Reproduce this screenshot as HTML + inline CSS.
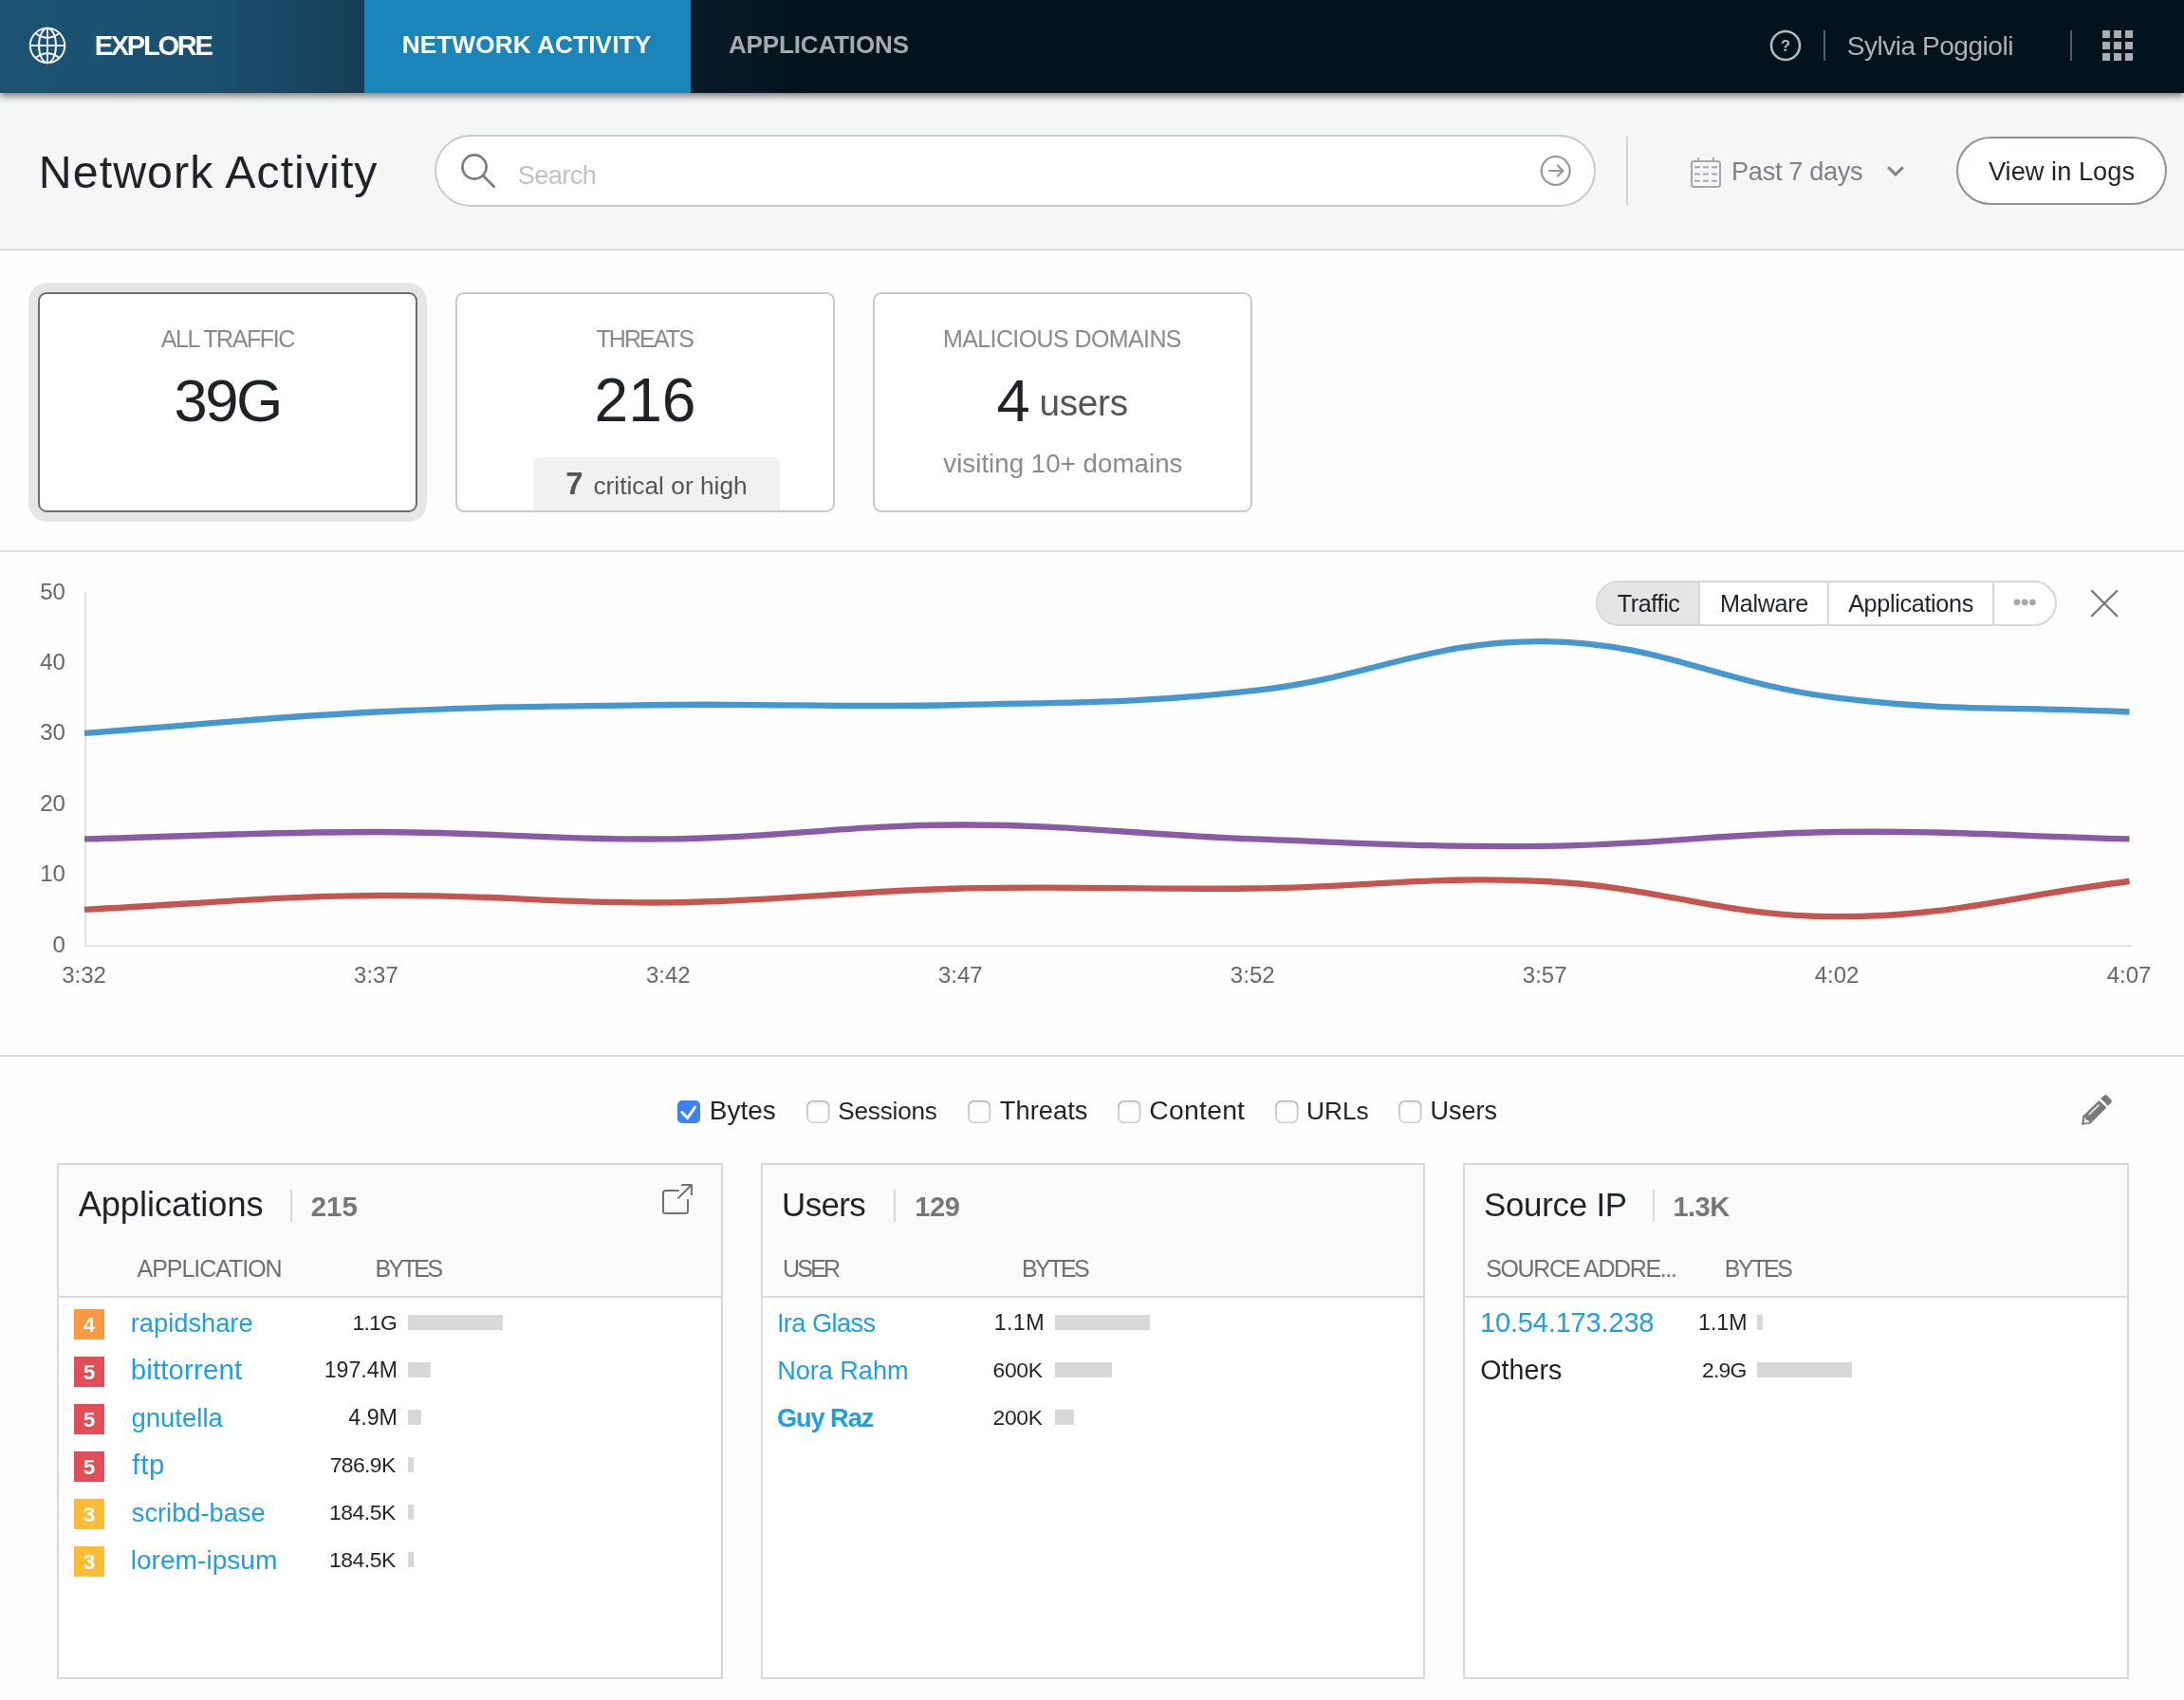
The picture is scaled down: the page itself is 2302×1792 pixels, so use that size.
<!DOCTYPE html>
<html><head><meta charset="utf-8"><title>Network Activity</title>
<style>
html,body{margin:0;padding:0;background:#fefefe;}
body{width:2302px;height:1792px;position:relative;overflow:hidden;background:#fefefe;font-family:"Liberation Sans",sans-serif;}
body>div{position:absolute;box-sizing:border-box;}
svg{position:absolute;left:0;top:0;will-change:transform;}
svg text{font-family:"Liberation Sans",sans-serif;}
</style></head><body>
<div style="left:0px;top:0px;width:2302px;height:262px;background:#f5f7f6;"></div>
<div style="left:0px;top:262px;width:2302px;height:2px;background:#dcdddd;"></div>
<div style="left:0px;top:0px;width:2302px;height:98px;background:#03131d;box-shadow:0 3px 8px rgba(0,0,0,.55);"></div>
<div style="left:728px;top:0px;width:130px;height:98px;background:linear-gradient(90deg,#071b28,#03131d);"></div>
<div style="left:0px;top:0px;width:384px;height:98px;background:linear-gradient(90deg,#1c5474 0%,#1b4f6e 60%,#163d55 100%);"></div>
<div style="left:384px;top:0px;width:344px;height:98px;background:#1b84b8;"></div>
<div style="left:1922px;top:32px;width:2px;height:32px;background:#535d66;"></div>
<div style="left:2182px;top:32px;width:2px;height:32px;background:#535d66;"></div>
<div style="left:458px;top:142px;width:1224px;height:76px;background:#fff;border:2px solid #c6c9cd;border-radius:38px;"></div>
<div style="left:1714px;top:144px;width:2px;height:72px;background:#d4d7da;"></div>
<div style="left:2062px;top:144px;width:222px;height:72px;background:#fff;border:2px solid #8e9399;border-radius:36px;"></div>
<div style="left:30px;top:298px;width:420px;height:252px;background:#e6e6e6;border-radius:20px;"></div>
<div style="left:40px;top:308px;width:400px;height:232px;background:#fff;border:2px solid #6e6e6e;border-radius:9px;"></div>
<div style="left:480px;top:308px;width:400px;height:232px;background:#fff;border:2px solid #c9c9c9;border-radius:9px;"></div>
<div style="left:920px;top:308px;width:400px;height:232px;background:#fff;border:2px solid #c9c9c9;border-radius:9px;"></div>
<div style="left:562px;top:482px;width:260px;height:56px;background:#f1f1f1;border-radius:7px 7px 0 0;"></div>
<div style="left:0px;top:580px;width:2302px;height:2px;background:#dcdcdc;"></div>
<div style="left:89px;top:624px;width:2px;height:374px;background:#e3e3e3;"></div>
<div style="left:89px;top:996px;width:2158px;height:2px;background:#e3e3e3;"></div>
<div style="left:1682px;top:612px;width:486px;height:48px;background:#fff;border:2px solid #d6d6d6;border-radius:24px;overflow:hidden;"></div>
<div style="left:1684px;top:614px;width:108px;height:44px;background:#e5e5e5;border-radius:22px 0 0 22px;"></div>
<div style="left:1790px;top:614px;width:2px;height:44px;background:#d6d6d6;"></div>
<div style="left:1926px;top:614px;width:2px;height:44px;background:#d6d6d6;"></div>
<div style="left:2100px;top:614px;width:2px;height:44px;background:#d6d6d6;"></div>
<div style="left:0px;top:1112px;width:2302px;height:2px;background:#dcdcdc;"></div>
<div style="left:714px;top:1160px;width:24px;height:24px;background:#3b82f6;border-radius:5px;"></div>
<div style="left:60px;top:1226px;width:702px;height:544px;background:#fff;border:2px solid #d8d8d8;"></div>
<div style="left:62px;top:1228px;width:698px;height:138px;background:#fafafa;"></div>
<div style="left:62px;top:1366px;width:698px;height:2px;background:#d8d8d8;"></div>
<div style="left:802px;top:1226px;width:700px;height:544px;background:#fff;border:2px solid #d8d8d8;"></div>
<div style="left:804px;top:1228px;width:696px;height:138px;background:#fafafa;"></div>
<div style="left:804px;top:1366px;width:696px;height:2px;background:#d8d8d8;"></div>
<div style="left:1542px;top:1226px;width:702px;height:544px;background:#fff;border:2px solid #d8d8d8;"></div>
<div style="left:1544px;top:1228px;width:698px;height:138px;background:#fafafa;"></div>
<div style="left:1544px;top:1366px;width:698px;height:2px;background:#d8d8d8;"></div>
<div style="left:306px;top:1254px;width:2px;height:34px;background:#d8d8d8;"></div>
<div style="left:78px;top:1380px;width:32px;height:32px;background:#f99a43;"></div>
<div style="left:430px;top:1386px;width:100px;height:16px;background:#d8d8d8;"></div>
<div style="left:78px;top:1430px;width:32px;height:32px;background:#e04e57;"></div>
<div style="left:430px;top:1436px;width:24px;height:16px;background:#d8d8d8;"></div>
<div style="left:78px;top:1480px;width:32px;height:32px;background:#e04e57;"></div>
<div style="left:430px;top:1486px;width:14px;height:16px;background:#d8d8d8;"></div>
<div style="left:78px;top:1530px;width:32px;height:32px;background:#e04e57;"></div>
<div style="left:430px;top:1536px;width:6px;height:16px;background:#d8d8d8;"></div>
<div style="left:78px;top:1580px;width:32px;height:32px;background:#fdbb36;"></div>
<div style="left:430px;top:1586px;width:6px;height:16px;background:#d8d8d8;"></div>
<div style="left:78px;top:1630px;width:32px;height:32px;background:#fdbb36;"></div>
<div style="left:430px;top:1636px;width:6px;height:16px;background:#d8d8d8;"></div>
<div style="left:942px;top:1254px;width:2px;height:34px;background:#d8d8d8;"></div>
<div style="left:1112px;top:1386px;width:100px;height:16px;background:#d8d8d8;"></div>
<div style="left:1112px;top:1436px;width:60px;height:16px;background:#d8d8d8;"></div>
<div style="left:1112px;top:1486px;width:20px;height:16px;background:#d8d8d8;"></div>
<div style="left:1742px;top:1254px;width:2px;height:34px;background:#d8d8d8;"></div>
<div style="left:1852px;top:1386px;width:6px;height:16px;background:#d8d8d8;"></div>
<div style="left:1852px;top:1436px;width:100px;height:16px;background:#d8d8d8;"></div>
<svg width="2302" height="1792" viewBox="0 0 2302 1792">
<g fill="none" stroke="#fff" stroke-width="1.9"><circle cx="50" cy="48" r="18.25"/><ellipse cx="50" cy="48" rx="9" ry="18.25"/><path d="M37.7 35.2Q50 44.2 62.3 35.2M37.7 60.8Q50 51.8 62.3 60.8"/><path d="M50 30V66M32 48H68" stroke="#e3e9ed"/></g>
<text x="99.65" y="58.00" font-size="29.1" font-weight="700" fill="#fff" textLength="125.28" lengthAdjust="spacing">EXPLORE</text>
<text x="423.65" y="56.20" font-size="26.2" font-weight="700" fill="#fff" textLength="262.47" lengthAdjust="spacing">NETWORK ACTIVITY</text>
<text x="767.95" y="56.20" font-size="26.0" font-weight="700" fill="#a4aaae" textLength="190.06" lengthAdjust="spacing">APPLICATIONS</text>
<circle cx="1882" cy="48" r="15" fill="none" stroke="#b3b8bc" stroke-width="2.6"/>
<text x="1882.00" y="54.00" font-size="16.5" font-weight="700" fill="#b3b8bc" text-anchor="middle">?</text>
<text x="1946.72" y="57.70" font-size="28.1" fill="#adb2b7" textLength="175.77" lengthAdjust="spacing">Sylvia Poggioli</text>
<rect x="2216" y="32" width="8" height="8" fill="#a9aeb2"/>
<rect x="2228" y="32" width="8" height="8" fill="#a9aeb2"/>
<rect x="2240" y="32" width="8" height="8" fill="#a9aeb2"/>
<rect x="2216" y="44" width="8" height="8" fill="#a9aeb2"/>
<rect x="2228" y="44" width="8" height="8" fill="#a9aeb2"/>
<rect x="2240" y="44" width="8" height="8" fill="#a9aeb2"/>
<rect x="2216" y="56" width="8" height="8" fill="#a9aeb2"/>
<rect x="2228" y="56" width="8" height="8" fill="#a9aeb2"/>
<rect x="2240" y="56" width="8" height="8" fill="#a9aeb2"/>
<text x="40.84" y="198.10" font-size="48.3" fill="#1f2328" textLength="356.66" lengthAdjust="spacing">Network Activity</text>
<g fill="none" stroke="#7b7c7d" stroke-width="2.7" stroke-linecap="round"><circle cx="500" cy="176" r="12.6"/><path d="M509.3 185.3L520.7 196.7"/></g>
<text x="545.76" y="194.00" font-size="27.2" fill="#c2c2c2" textLength="83.00" lengthAdjust="spacing">Search</text>
<g fill="none" stroke="#92979b" stroke-width="2.1"><circle cx="1639.7" cy="180" r="15"/><path d="M1632.3 180H1647M1641.3 173.8L1647.4 180L1641.3 186.2" stroke-linejoin="miter"/></g>
<g fill="none" stroke="#a3a8ac" stroke-width="2"><rect x="1783" y="170" width="30" height="27" rx="2.5"/><path d="M1790 166v4M1806 166v4"/><path d="M1786 176.2h6M1795 176.2h6M1804 176.2h6M1786 183.5h6M1795 183.5h6M1804 183.5h6M1786 190.8h6M1795 190.8h6M1804 190.8h6"/></g>
<text x="1825.07" y="189.90" font-size="27.2" fill="#7f8184" textLength="138.61" lengthAdjust="spacing">Past 7 days</text>
<path d="M1990.2 176.2L1998 184L2005.8 176.2" fill="none" stroke="#7c8288" stroke-width="3"/>
<text x="2095.88" y="189.90" font-size="27.2" fill="#1f2328" textLength="154.10" lengthAdjust="spacing">View in Logs</text>
<text x="169.85" y="365.90" font-size="25.0" fill="#8a8a8a" textLength="141.40" lengthAdjust="spacing">ALL TRAFFIC</text>
<text x="183.49" y="444.00" font-size="63.4" fill="#1f2328" textLength="114.85" lengthAdjust="spacing">39G</text>
<text x="628.44" y="365.90" font-size="25.0" fill="#8a8a8a" textLength="103.41" lengthAdjust="spacing">THREATS</text>
<text x="626.47" y="443.60" font-size="64.2" fill="#1f2328" textLength="107.05" lengthAdjust="spacing">216</text>
<text x="596.29" y="521.00" font-size="32.9" font-weight="700" fill="#555" textLength="20.16" lengthAdjust="spacing">7</text>
<text x="625.38" y="521.00" font-size="26.3" fill="#555" textLength="162.33" lengthAdjust="spacing">critical or high</text>
<text x="993.95" y="365.90" font-size="25.0" fill="#8a8a8a" textLength="251.60" lengthAdjust="spacing">MALICIOUS DOMAINS</text>
<text x="1050.54" y="444.00" font-size="63.5" fill="#1f2328" textLength="35.32" lengthAdjust="spacing">4</text>
<text x="1095.48" y="438.00" font-size="38.8" fill="#555" textLength="93.62" lengthAdjust="spacing">users</text>
<text x="994.31" y="498.00" font-size="27.7" fill="#8a8a8a" textLength="252.10" lengthAdjust="spacing">visiting 10+ domains</text>
<text x="68.94" y="1003.50" font-size="24" fill="#666" text-anchor="end">0</text>
<text x="68.94" y="929.10" font-size="24" fill="#666" text-anchor="end">10</text>
<text x="68.94" y="854.70" font-size="24" fill="#666" text-anchor="end">20</text>
<text x="68.94" y="780.30" font-size="24" fill="#666" text-anchor="end">30</text>
<text x="68.94" y="705.90" font-size="24" fill="#666" text-anchor="end">40</text>
<text x="68.94" y="631.50" font-size="24" fill="#666" text-anchor="end">50</text>
<text x="88.50" y="1035.90" font-size="24" fill="#666" text-anchor="middle">3:32</text>
<text x="396.43" y="1035.90" font-size="24" fill="#666" text-anchor="middle">3:37</text>
<text x="704.36" y="1035.90" font-size="24" fill="#666" text-anchor="middle">3:42</text>
<text x="1012.29" y="1035.90" font-size="24" fill="#666" text-anchor="middle">3:47</text>
<text x="1320.22" y="1035.90" font-size="24" fill="#666" text-anchor="middle">3:52</text>
<text x="1628.15" y="1035.90" font-size="24" fill="#666" text-anchor="middle">3:57</text>
<text x="1936.08" y="1035.90" font-size="24" fill="#666" text-anchor="middle">4:02</text>
<text x="2244.01" y="1035.90" font-size="24" fill="#666" text-anchor="middle">4:07</text>
<path d="M89.0 772.8C212.2 763.9 273.6 756.4 396.9 750.5C520.0 744.5 581.7 744.5 704.9 743.0C828.0 741.6 889.7 746.0 1012.8 743.0C1136.0 740.1 1198.3 741.5 1320.7 728.2C1444.7 714.7 1505.7 674.6 1628.7 676.1C1752.1 677.6 1812.4 720.6 1936.6 735.6C2058.7 750.4 2121.3 744.5 2244.5 750.5" fill="none" stroke="#4497cf" stroke-width="6.3"/>
<path d="M89.0 884.4C212.2 881.4 273.8 877.0 396.9 877.0C520.1 877.0 581.7 885.9 704.9 884.4C828.1 882.9 889.6 869.5 1012.8 869.5C1136.0 869.5 1197.5 879.9 1320.7 884.4C1443.8 888.9 1505.5 893.3 1628.7 891.8C1751.9 890.4 1813.4 878.4 1936.6 877.0C2059.7 875.5 2121.3 881.4 2244.5 884.4" fill="none" stroke="#8b5aa6" stroke-width="6.3"/>
<path d="M89.0 958.8C212.2 952.8 273.7 945.4 396.9 943.9C520.0 942.4 581.7 952.8 704.9 951.4C828.1 949.9 889.5 939.5 1012.8 936.5C1135.9 933.5 1197.6 938.0 1320.7 936.5C1443.9 935.0 1505.9 923.1 1628.7 929.0C1752.3 935.0 1813.4 966.2 1936.6 966.2C2059.8 966.2 2121.3 943.9 2244.5 929.0" fill="none" stroke="#c6544f" stroke-width="6.3"/>
<text x="1704.63" y="644.50" font-size="25.2" fill="#1f2328" textLength="66.33" lengthAdjust="spacing">Traffic</text>
<text x="1813.03" y="644.50" font-size="25.2" fill="#1f2328" textLength="93.29" lengthAdjust="spacing">Malware</text>
<text x="1948.15" y="644.50" font-size="25.2" fill="#1f2328" textLength="132.16" lengthAdjust="spacing">Applications</text>
<circle cx="2126" cy="634.8" r="3.4" fill="#a8a8a8"/>
<circle cx="2134.2" cy="634.8" r="3.4" fill="#a8a8a8"/>
<circle cx="2142.4" cy="634.8" r="3.4" fill="#a8a8a8"/>
<path d="M2204.9 622.9L2231.3 649.3M2231.3 622.9L2204.9 649.3" stroke="#777a7c" stroke-width="2.2" stroke-linecap="round" fill="none"/>
<path d="M718.8 1172.4L724.6 1178.6L732.6 1167" fill="none" stroke="#fff" stroke-width="3" stroke-linecap="round" stroke-linejoin="round"/>
<defs><linearGradient id="cbg" x1="0" y1="0" x2="0" y2="1"><stop offset="0" stop-color="#f3f3f3"/><stop offset=".35" stop-color="#fff"/></linearGradient><linearGradient id="cbs" x1="0" y1="0" x2="0" y2="1"><stop offset="0" stop-color="#b3b3b3"/><stop offset="1" stop-color="#cfcfcf"/></linearGradient></defs>
<rect x="851.1999999999999" y="1160.8" width="22.4" height="22.4" rx="5.5" fill="url(#cbg)" stroke="url(#cbs)" stroke-width="1.6"/>
<rect x="1021.0" y="1160.8" width="22.4" height="22.4" rx="5.5" fill="url(#cbg)" stroke="url(#cbs)" stroke-width="1.6"/>
<rect x="1179.1" y="1160.8" width="22.4" height="22.4" rx="5.5" fill="url(#cbg)" stroke="url(#cbs)" stroke-width="1.6"/>
<rect x="1345.2" y="1160.8" width="22.4" height="22.4" rx="5.5" fill="url(#cbg)" stroke="url(#cbs)" stroke-width="1.6"/>
<rect x="1475.2" y="1160.8" width="22.4" height="22.4" rx="5.5" fill="url(#cbg)" stroke="url(#cbs)" stroke-width="1.6"/>
<text x="747.70" y="1179.50" font-size="28.0" fill="#1f2328" textLength="70.11" lengthAdjust="spacing">Bytes</text>
<text x="883.21" y="1179.50" font-size="26.2" fill="#1f2328" textLength="104.74" lengthAdjust="spacing">Sessions</text>
<text x="1053.79" y="1179.50" font-size="27.3" fill="#1f2328" textLength="92.70" lengthAdjust="spacing">Threats</text>
<text x="1211.36" y="1179.50" font-size="28.4" fill="#1f2328" textLength="100.65" lengthAdjust="spacing">Content</text>
<text x="1376.97" y="1179.50" font-size="26.3" fill="#1f2328" textLength="65.78" lengthAdjust="spacing">URLs</text>
<text x="1507.52" y="1179.50" font-size="27.0" fill="#1f2328" textLength="70.46" lengthAdjust="spacing">Users</text>
<g transform="translate(2194 1154)" fill="#777b7d"><path d="M18.4 6L26.4 13.6L9.4 30.4L0.6 31.8Q-0.1 31.9 0 31.2L1.3 22.4Z"/><path d="M20.3 4.1L23.8 0.7Q25.3 -0.6 26.8 0.8L31.3 5.3Q32.7 6.8 31.3 8.2L27.9 11.8Z"/><path d="M7.8 20.9L18.5 10.5" stroke="#fff" stroke-width="1.4" fill="none"/><path d="M3.4 23.6L5 26.6L8.6 28.2L8.2 29L2.6 29.8Z" fill="#fff"/></g>
<text x="82.63" y="1281.80" font-size="36.2" fill="#1f2328" textLength="194.98" lengthAdjust="spacing">Applications</text>
<text x="327.78" y="1281.80" font-size="29.4" font-weight="700" fill="#777" textLength="49.04" lengthAdjust="spacing">215</text>
<text x="144.55" y="1345.60" font-size="25.0" fill="#707070" textLength="153.09" lengthAdjust="spacing">APPLICATION</text>
<text x="395.45" y="1345.60" font-size="25.0" fill="#707070" textLength="71.70" lengthAdjust="spacing">BYTES</text>
<g fill="none" stroke="#6d7276" stroke-width="2"><path d="M715.8 1255H701.5Q699 1255 699 1257.5V1276.5Q699 1279 701.5 1279H722.5Q725 1279 725 1276.5V1264.2"/><path d="M714.4 1263.4L728.6 1249.2M718.2 1249H728.9V1260"/></g>
<text x="94.00" y="1404.40" font-size="22.5" font-weight="700" fill="#fff" text-anchor="middle">4</text>
<text x="137.79" y="1404.20" font-size="27.3" fill="#1f9fe0" textLength="128.83" lengthAdjust="spacing">rapidshare</text>
<text x="371.56" y="1402.00" font-size="22.9" fill="#1f2328" textLength="47.16" lengthAdjust="spacing">1.1G</text>
<text x="94.00" y="1454.40" font-size="22.5" font-weight="700" fill="#fff" text-anchor="middle">5</text>
<text x="137.71" y="1454.20" font-size="29.4" fill="#1f9fe0" textLength="117.51" lengthAdjust="spacing">bittorrent</text>
<text x="341.74" y="1452.00" font-size="23.1" fill="#1f2328" textLength="77.15" lengthAdjust="spacing">197.4M</text>
<text x="94.00" y="1504.40" font-size="22.5" font-weight="700" fill="#fff" text-anchor="middle">5</text>
<text x="138.45" y="1504.20" font-size="27.5" fill="#1f9fe0" textLength="96.35" lengthAdjust="spacing">gnutella</text>
<text x="367.27" y="1502.00" font-size="23.2" fill="#1f2328" textLength="51.64" lengthAdjust="spacing">4.9M</text>
<text x="94.00" y="1554.40" font-size="22.5" font-weight="700" fill="#fff" text-anchor="middle">5</text>
<text x="139.18" y="1554.20" font-size="29.4" fill="#1f9fe0" textLength="34.25" lengthAdjust="spacing">ftp</text>
<text x="347.63" y="1552.00" font-size="22.9" fill="#1f2328" textLength="69.63" lengthAdjust="spacing">786.9K</text>
<text x="94.00" y="1604.40" font-size="22.5" font-weight="700" fill="#fff" text-anchor="middle">3</text>
<text x="138.84" y="1604.20" font-size="27.2" fill="#1f9fe0" textLength="140.67" lengthAdjust="spacing">scribd-base</text>
<text x="347.06" y="1602.00" font-size="22.9" fill="#1f2328" textLength="70.20" lengthAdjust="spacing">184.5K</text>
<text x="94.00" y="1654.40" font-size="22.5" font-weight="700" fill="#fff" text-anchor="middle">3</text>
<text x="137.71" y="1654.20" font-size="28.1" fill="#1f9fe0" textLength="154.65" lengthAdjust="spacing">lorem-ipsum</text>
<text x="347.06" y="1652.00" font-size="22.9" fill="#1f2328" textLength="70.20" lengthAdjust="spacing">184.5K</text>
<text x="824.11" y="1281.80" font-size="34.9" fill="#1f2328" textLength="88.65" lengthAdjust="spacing">Users</text>
<text x="964.17" y="1281.80" font-size="29.1" font-weight="700" fill="#777" textLength="47.71" lengthAdjust="spacing">129</text>
<text x="824.97" y="1345.60" font-size="25.0" fill="#707070" textLength="61.19" lengthAdjust="spacing">USER</text>
<text x="1076.95" y="1345.60" font-size="25.0" fill="#707070" textLength="71.80" lengthAdjust="spacing">BYTES</text>
<text x="818.89" y="1404.20" font-size="27.2" fill="#1f9fe0" textLength="104.19" lengthAdjust="spacing">Ira Glass</text>
<text x="1047.63" y="1402.00" font-size="23.3" fill="#1f2328" textLength="52.99" lengthAdjust="spacing">1.1M</text>
<text x="819.17" y="1454.20" font-size="27.2" fill="#1f9fe0" textLength="138.42" lengthAdjust="spacing">Nora Rahm</text>
<text x="1046.54" y="1452.00" font-size="22.9" fill="#1f2328" textLength="52.42" lengthAdjust="spacing">600K</text>
<text x="818.88" y="1504.20" font-size="27.2" font-weight="700" fill="#1f9fe0" textLength="102.50" lengthAdjust="spacing">Guy Raz</text>
<text x="1046.55" y="1502.00" font-size="22.9" fill="#1f2328" textLength="52.41" lengthAdjust="spacing">200K</text>
<text x="1563.92" y="1281.80" font-size="34.9" fill="#1f2328" textLength="151.23" lengthAdjust="spacing">Source IP</text>
<text x="1763.47" y="1281.80" font-size="29.1" font-weight="700" fill="#777" textLength="59.70" lengthAdjust="spacing">1.3K</text>
<text x="1566.16" y="1345.60" font-size="25.0" fill="#707070" textLength="201.72" lengthAdjust="spacing">SOURCE ADDRE...</text>
<text x="1817.65" y="1345.60" font-size="25.0" fill="#707070" textLength="72.30" lengthAdjust="spacing">BYTES</text>
<text x="1559.98" y="1404.20" font-size="29.1" fill="#1f9fe0" textLength="183.58" lengthAdjust="spacing">10.54.173.238</text>
<text x="1790.03" y="1402.00" font-size="23.2" fill="#1f2328" textLength="51.57" lengthAdjust="spacing">1.1M</text>
<text x="1560.14" y="1454.20" font-size="28.7" fill="#1f2328" textLength="86.20" lengthAdjust="spacing">Others</text>
<text x="1793.95" y="1452.00" font-size="22.9" fill="#1f2328" textLength="47.46" lengthAdjust="spacing">2.9G</text>
</svg>
</body></html>
